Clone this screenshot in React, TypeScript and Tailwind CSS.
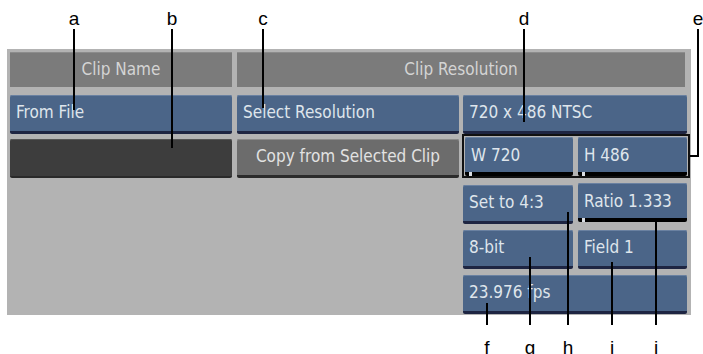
const UI_FONT = "font-['DejaVu_Sans_Condensed','DejaVu_Sans',sans-serif]";

type Callout = { letter: string; x: number; y1: number; y2: number; top: boolean };

const CALLOUTS: Callout[] = [
  { letter: "a", x: 74, y1: 29, y2: 110, top: true },
  { letter: "b", x: 172, y1: 29, y2: 148, top: true },
  { letter: "c", x: 263, y1: 29, y2: 108, top: true },
  { letter: "d", x: 524, y1: 29, y2: 122, top: true },
  { letter: "e", x: 698, y1: 29, y2: 157, top: true },
  { letter: "f", x: 487, y1: 303, y2: 325, top: false },
  { letter: "g", x: 530, y1: 257, y2: 325, top: false },
  { letter: "h", x: 568, y1: 212, y2: 325, top: false },
  { letter: "i", x: 612, y1: 262, y2: 325, top: false },
  { letter: "j", x: 656, y1: 218, y2: 325, top: false },
];

function Header({ label, className }: { label: string; className: string }) {
  return (
    <div
      className={`flex h-[35px] items-center justify-center bg-[#7b7b7b] text-[17px] text-[#d4d4d4] shadow-[inset_0_1px_0_#8c8c8c] ${UI_FONT} ${className}`}
    >
      {label}
    </div>
  );
}

function Btn({
  label,
  className = "",
  center = false,
  bar = false,
}: {
  label: string;
  className?: string;
  center?: boolean;
  bar?: boolean;
}) {
  return (
    <div
      className={`relative flex h-[39px] items-center rounded-[2px] bg-[#4b6588] text-[17px] text-[#dfe5ec] shadow-[inset_0_1px_0_#6a81a1] ${
        bar ? "border-b-[4px] border-black pt-[2px]" : "border-b-[3px] border-[#1e2542]"
      } ${center ? "justify-center" : "pl-[6px]"} ${UI_FONT} ${className}`}
    >
      {label}
      {bar && <div className="absolute bottom-[-4px] left-[4px] h-[4px] w-[3px] bg-[#d9dde3]" />}
    </div>
  );
}

export default function App() {
  return (
    <div className="relative h-[354px] w-[703px] overflow-hidden bg-white">
      <div className="ml-[7px] mt-[49px] flex h-[266px] w-[684px] flex-col bg-[#b3b3b3] pl-[3px] pt-[3px]">
        <div className="flex gap-[5px]">
          <Header label="Clip Name" className="w-[222px]" />
          <Header label="Clip Resolution" className="w-[448px]" />
        </div>

        <div className="mt-[8px] flex gap-[5px]">
          <Btn label="From File" className="w-[222px]" />
          <Btn label="Select Resolution" className="w-[222px]" />
          <Btn label="720 x 486 NTSC" className="ml-[-1px] w-[224px]" />
        </div>

        <div className="mt-[5px] flex gap-[5px]">
          <div className="h-[39px] w-[222px] rounded-[2px] border-b-[2px] border-[#2a2a2a] bg-[#3d3d3d] shadow-[inset_0_1px_0_#555]" />
          <div
            className={`flex h-[39px] w-[222px] items-center justify-center rounded-[2px] border-b-[3px] border-[#2b2b2b] bg-[#6c6c6c] text-[17px] text-[#e2e2e2] shadow-[inset_0_1px_0_#8a8a8a] ${UI_FONT}`}
          >
            Copy from Selected Clip
          </div>
          <div className="ml-[-2px] mt-[-5px] flex h-[44px] w-[228px] gap-[5px] border-[2px] border-[#111] px-[1px] pt-[1px]">
            <Btn label="W 720" className="h-[38px] w-[108px]" bar />
            <Btn label="H 486" className="h-[38px] w-[109px]" bar />
          </div>
        </div>

        <div className="mt-[7px] flex flex-col gap-[6px] pl-[453px]">
          <div className="flex gap-[5px]">
            <Btn label="Set to 4:3" className="h-[37px] w-[110px]" />
            <div className="mt-[-2px] w-[109px]">
              <Btn label="Ratio 1.333" className="h-[36px] w-[109px]" bar />
            </div>
          </div>
          <div className="flex gap-[5px]">
            <Btn label="8-bit" className="w-[110px]" />
            <Btn label="Field 1" className="w-[109px]" />
          </div>
          <Btn label="23.976 fps" className="w-[224px]" />
        </div>
      </div>

      {CALLOUTS.map((c) => (
        <div key={c.letter}>
          <div
            className="absolute w-[2px] bg-black"
            style={{ left: c.x - 1, top: c.y1, height: c.y2 - c.y1 }}
          />
          <div
            className="absolute w-[20px] text-center font-['Liberation_Sans',Arial,sans-serif] text-[19px] leading-none text-black"
            style={{ left: c.x - 10, top: c.top ? 9 : 338 }}
          >
            {c.letter}
          </div>
        </div>
      ))}
      <div className="absolute left-[690px] top-[155px] h-[2px] w-[9px] bg-black" />
    </div>
  );
}
